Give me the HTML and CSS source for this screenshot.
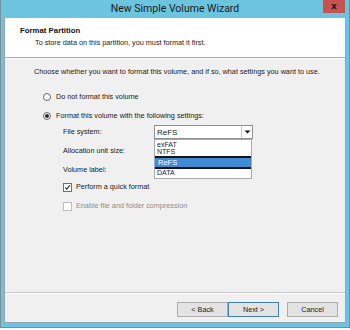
FILE: index.html
```html
<!DOCTYPE html>
<html>
<head>
<meta charset="utf-8">
<link rel="stylesheet" href="styles.css">
</head>
<body>
<div class="window">
  <div class="titlebar">
    <span class="title">New Simple Volume Wizard</span>
    <span class="close">x</span>
  </div>
  <div class="client">
    <div class="header">
      <div class="h-title">Format Partition</div>
      <div class="h-sub">To store data on this partition, you must format it first.</div>
    </div>
    <div class="content">
      <div class="line choose">Choose whether you want to format this volume, and if so, what settings you want to use.</div>
      <div class="line opt opt1"><span class="radio"></span>Do not format this volume</div>
      <div class="line opt opt2"><span class="radio checked"></span>Format this volume with the following settings:</div>
      <div class="settings">
        <div class="label">File system:</div>
        <div class="combo">
          <span class="combo-text">ReFS</span>
          <span class="combo-btn"><svg width="7" height="4" viewBox="0 0 7 4"><path d="M0.5 0.5h6l-3 3z" fill="#111"/></svg></span>
          <div class="droplist">
            <div class="item i1">exFAT</div>
            <div class="item i2">NTFS</div>
            <div class="item sel">ReFS</div>
            <div class="item i4">DATA</div>
          </div>
        </div>
        <div class="label">Allocation unit size:</div>
        <div class="field"></div>
        <div class="label">Volume label:</div>
        <div class="field"></div>
      </div>
      <div class="line chk chk1"><span class="box"><svg width="9" height="9" viewBox="0 0 9 9"><path d="M1.5 4.5l2 2.2 4-5" fill="none" stroke="#222" stroke-width="1.4"/></svg></span>Perform a quick format</div>
      <div class="line chk chk2 disabled"><span class="box"></span>Enable file and folder compression</div>
    </div>
    <div class="footer">
      <button class="btn">&lt; Back</button>
      <button class="btn default">Next &gt;</button>
      <button class="btn cancel">Cancel</button>
    </div>
  </div>
</div>
</body>
</html>
```
FILE: styles.css
```css
html, body {
  margin: 0;
  padding: 0;
  background: #ffffff;
}
body {
  width: 350px;
  height: 330px;
  overflow: hidden;
  font-family: "Liberation Sans", Arial, sans-serif;
  font-size: 7.25px;
  color: #1a1a1a;
}
.window {
  box-sizing: border-box;
  width: 350px;
  height: 328px;
  background: #6cc4df;
  border: 1px solid #7d8d94;
  border-top: none;
  display: flex;
  flex-direction: column;
}
.titlebar {
  position: relative;
  height: 18px;
  flex: none;
  display: flex;
  align-items: center;
  justify-content: center;
}
.title {
  font-family: Roboto, "Liberation Sans", sans-serif;
  font-size: 10.5px;
  color: #1b1b1b;
  line-height: 18px;
}
.close {
  position: absolute;
  top: 0;
  right: 4px;
  width: 22px;
  height: 13px;
  background: #c75250;
  color: #1a1a1a;
  font-family: "DejaVu Sans", sans-serif;
  font-weight: bold;
  font-size: 9px;
  line-height: 12px;
  text-align: center;
}
.client {
  flex: 1;
  margin: 0 3px 4px 3px;
  border: 1px solid #8aa7b3;
  border-top: none;
  background: #f0f0f0;
  display: flex;
  flex-direction: column;
}
.header {
  flex: none;
  height: 40px;
  background: #ffffff;
  border-bottom: 1px solid #a8a8a8;
  box-shadow: 0 1px 0 #ffffff;
  box-sizing: border-box;
  padding-top: 7px;
}
.h-title {
  font-weight: bold;
  padding-left: 15px;
  line-height: 12px;
  font-size: 7.8px;
  color: #111;
}
.h-sub {
  padding-left: 30px;
  line-height: 12px;
}
.content {
  flex: 1;
  padding-left: 29px;
  position: relative;
}
.line {
  height: 12px;
  line-height: 12px;
  display: flex;
  align-items: center;
  white-space: nowrap;
}
.choose { margin-top: 8px; }
.opt { padding-left: 9px; }
.opt1 { margin-top: 13px; }
.opt2 { margin-top: 7px; }
.radio {
  box-sizing: border-box;
  width: 8px;
  height: 8px;
  border: 1px solid #666;
  border-radius: 50%;
  background: #fff;
  margin-right: 5px;
  display: flex;
  align-items: center;
  justify-content: center;
}
.radio.checked::after {
  content: "";
  width: 4px;
  height: 4px;
  border-radius: 50%;
  background: #2a2a2a;
}
.settings {
  margin-top: 3px;
  padding-left: 29px;
  display: grid;
  grid-template-columns: 91px 99px;
  grid-auto-rows: 14px;
  row-gap: 5px;
  align-items: center;
}
.label { line-height: 14px; }
.combo {
  position: relative;
  box-sizing: border-box;
  height: 14px;
  border: 1px solid #8f8f8f;
  background: #fff;
  display: flex;
  align-items: center;
}
.combo-text {
  flex: 1;
  padding-left: 2px;
  font-size: 8px;
}
.combo-btn {
  width: 10px;
  height: 12px;
  border-left: 1px solid #c6c6c6;
  display: flex;
  align-items: center;
  justify-content: center;
}
.field { height: 14px; }
.droplist {
  position: absolute;
  top: 13px;
  left: -1px;
  width: 98px;
  height: 40px;
  box-sizing: border-box;
  border: 1px solid #a9a9a9;
  background: #fff;
  z-index: 2;
  overflow: hidden;
}
.item {
  font-size: 7px;
  padding-left: 2px;
  color: #1c2330;
}
.i1 { height: 8px; line-height: 9px; }
.i2 { height: 8px; line-height: 7px; }
.sel {
  box-sizing: border-box;
  height: 13px;
  line-height: 9px;
  margin-left: -3px;
  width: 102px;
  padding-left: 4px;
  font-size: 7.5px;
  border: 2px solid #141414;
  border-radius: 3px;
  background: #408bd4;
  color: #fff;
}
.i4 { height: 9px; line-height: 8px; }
.chk { padding-left: 29px; }
.chk1 { margin-top: 4px; }
.chk2 { margin-top: 7px; }
.box {
  box-sizing: border-box;
  width: 9px;
  height: 9px;
  border: 1px solid #6f6f6f;
  background: #fff;
  margin-right: 4px;
  display: flex;
  align-items: center;
  justify-content: center;
}
.box svg { display: block; }
.disabled { color: #8d8d8d; }
.disabled .box { border-color: #bdbdbd; }
.footer {
  flex: none;
  height: 30px;
  box-sizing: border-box;
  border-top: 1px solid #c9c9c9;
  box-shadow: inset 0 1px 0 #ffffff;
  display: flex;
  justify-content: flex-end;
  padding: 9px 7px 0 0;
}
.btn {
  box-sizing: border-box;
  width: 51px;
  height: 15px;
  padding: 0;
  margin: 0;
  border: 1px solid #acacac;
  background: #e3e3e3;
  font-family: "Liberation Sans", Arial, sans-serif;
  font-size: 7.25px;
  color: #1a1a1a;
}
.btn.default { border-color: #3f7fb5; }
.btn.cancel { margin-left: 8px; }
```
